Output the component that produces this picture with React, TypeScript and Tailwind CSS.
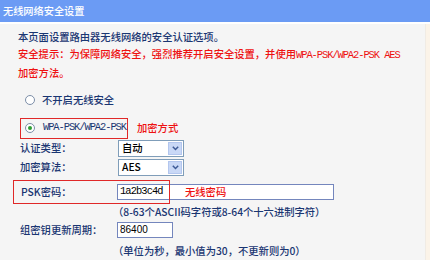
import React from "react";

const cjk = "font-['Noto_Sans_CJK_SC','Noto_Sans',sans-serif]";
const mono = "font-['Liberation_Mono',monospace] text-[10.4px] tracking-[-1.05px] font-normal";

function Radio({ checked }: { checked?: boolean }) {
  return (
    <span className="w-[10px] h-[10px] rounded-full border border-[#7c8ea8] bg-white flex items-center justify-center shrink-0">
      {checked && <span className="w-[4px] h-[4px] rounded-full bg-[#2f9e34]" />}
    </span>
  );
}

function Select({ value }: { value: string }) {
  return (
    <div className="w-[66px] h-[17px] border border-[#7f9db9] bg-white flex items-stretch">
      <div className="flex-1 pl-[3px] flex items-center text-[10.3px] text-black leading-none">{value}</div>
      <div className="w-[14px] my-[1px] mr-[1px] bg-[#c9d8f6] border border-[#b3c6ee] flex items-center justify-center">
        <svg width="7" height="5" viewBox="0 0 7 5">
          <path d="M0.8 0.8 L3.5 3.5 L6.2 0.8" fill="none" stroke="#3d5a96" strokeWidth="1.5" />
        </svg>
      </div>
    </div>
  );
}

export default function App() {
  return (
    <div className={`w-[430px] h-[260px] flex flex-col overflow-hidden ${cjk} text-[10.3px] font-medium text-[#1a3672]`}>
      <div className="h-[22px] bg-[#6b9bf4] text-white flex items-center pl-[3px] text-[10.2px] shrink-0">
        无线网络安全设置
      </div>
      <div className="h-[2px] bg-white shrink-0" />
      <div className="flex flex-1">
        <div className="flex-1 bg-[#f5f5f5] pl-[18px] pt-[3.5px]">
          <div className="leading-[17px]">
            <div>本页面设置路由器无线网络的安全认证选项。</div>
            <div className="text-[#ee1111]">
              安全提示：为保障网络安全，强烈推荐开启安全设置，并使用<span className={mono}>WPA-PSK/WPA2-PSK AES</span>
            </div>
            <div className="text-[#ee1111]">加密方法。</div>
          </div>

          <div className="mt-[10px] h-[18px] flex items-center pl-[7px] gap-[7px]">
            <Radio />
            <span>不开启无线安全</span>
          </div>

          <div className="mt-[9px] flex items-center h-[21px]">
            <div className="ml-[2px] w-[108px] h-[21px] border border-[#e02828] flex items-center pl-[4px] gap-[8px]">
              <Radio checked />
              <span className={mono}>WPA-PSK/WPA2-PSK</span>
            </div>
            <span className="ml-[9px] text-[#ee1111]">加密方式</span>
          </div>

          <div className="mt-[1px] flex items-center h-[17px]">
            <span className="w-[100px] pl-[2px]">认证类型：</span>
            <Select value="自动" />
          </div>
          <div className="mt-[2px] flex items-center h-[17px]">
            <span className="w-[100px] pl-[2px]">加密算法：</span>
            <Select value="AES" />
          </div>

          <div className="relative mt-[4px] h-[24px] flex items-center">
            <span className="w-[99px] pl-[3px]">PSK密码：</span>
            <div className="w-[217px] h-[16px] border border-[#7486bd] bg-white flex items-center pl-[2px]">
              <span className="font-['Liberation_Mono',monospace] text-[10.4px] tracking-[-0.9px] font-normal text-black">1a2b3c4d</span>
            </div>
            <span className="absolute left-[167px] top-[4px] text-[#ee1111] leading-[16px]">无线密码</span>
            <div className="absolute left-[-5px] top-0 w-[157px] h-[24px] border border-[#e02828] pointer-events-none" />
          </div>
          <div className="pl-[95px] leading-[15px]">（8-63个ASCII码字符或8-64个十六进制字符）</div>

          <div className="mt-[3px] flex items-center h-[16px]">
            <span className="w-[99px] pl-[2px]">组密钥更新周期：</span>
            <div className="w-[56px] h-[16px] border border-[#7486bd] bg-white flex items-center pl-[2px]">
              <span className="text-[10px] text-black font-['Liberation_Sans',sans-serif]">86400</span>
            </div>
          </div>
          <div className="mt-[5px] pl-[95px] leading-[15px]">（单位为秒，最小值为30，不更新则为0）</div>
        </div>
        <div className="w-[5px] border-l border-[#f0ebe4] bg-[#fbf3e8]" />
      </div>
    </div>
  );
}
